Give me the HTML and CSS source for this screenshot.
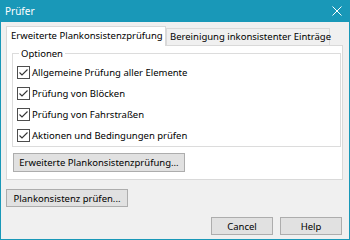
FILE: index.html
```html
<!DOCTYPE html>
<html lang="de">
<head>
  <meta charset="UTF-8">
  <title>Prüfer</title>
  <link rel="stylesheet" href="styles.css">
</head>
<body>
  <div class="window">
    <div class="titlebar">
      <span class="title">Prüfer</span>
      <svg class="close" width="10" height="10" viewBox="0 0 10 10">
        <path d="M0.5 0.5 L9.5 9.5 M9.5 0.5 L0.5 9.5" stroke="#fff" stroke-width="1" fill="none"/>
      </svg>
    </div>

    <div class="content">
      <div class="tabs">
        <div class="tab active">Erweiterte Plankonsistenzprüfung</div>
        <div class="tab">Bereinigung inkonsistenter Einträge</div>
      </div>

      <div class="panel">
        <fieldset class="group">
          <legend>Optionen</legend>
          <label class="check"><span class="box"><svg width="11" height="11" viewBox="0 0 11 11"><path d="M1.5 5.5 L4 8 L9.5 2.5" stroke="#333" stroke-width="1.1" fill="none"/></svg></span>Allgemeine Prüfung aller Elemente</label>
          <label class="check"><span class="box"><svg width="11" height="11" viewBox="0 0 11 11"><path d="M1.5 5.5 L4 8 L9.5 2.5" stroke="#333" stroke-width="1.1" fill="none"/></svg></span>Prüfung von Blöcken</label>
          <label class="check"><span class="box"><svg width="11" height="11" viewBox="0 0 11 11"><path d="M1.5 5.5 L4 8 L9.5 2.5" stroke="#333" stroke-width="1.1" fill="none"/></svg></span>Prüfung von Fahrstraßen</label>
          <label class="check"><span class="box"><svg width="11" height="11" viewBox="0 0 11 11"><path d="M1.5 5.5 L4 8 L9.5 2.5" stroke="#333" stroke-width="1.1" fill="none"/></svg></span>Aktionen und Bedingungen prüfen</label>
        </fieldset>
        <button class="btn btn-extended">Erweiterte Plankonsistenzprüfung...</button>
      </div>

      <button class="btn btn-check">Plankonsistenz prüfen...</button>

      <div class="actions">
        <button class="btn btn-dialog">Cancel</button>
        <button class="btn btn-dialog">Help</button>
      </div>
    </div>
  </div>
</body>
</html>
```

FILE: styles.css
```css
body {
  margin: 0;
  font-family: "Noto Sans", "DejaVu Sans", sans-serif;
  font-size: 9.5px;
  color: #000;
}

.window {
  width: 350px;
  height: 240px;
  box-sizing: border-box;
  border: 1px solid #1998b8;
  border-top: 0;
  background: #f0f0f0;
  display: flex;
  flex-direction: column;
}

.titlebar {
  height: 22px;
  margin: 0 -1px;
  padding: 0 8px 0 5px;
  background: #1998b8;
  color: #fff;
  display: flex;
  align-items: center;
  justify-content: space-between;
  flex-shrink: 0;
}

.title {
  font-size: 10px;
}

.content {
  padding: 4px 6px 0 5px;
  display: flex;
  flex-direction: column;
}

.tabs {
  display: flex;
  align-items: flex-end;
  height: 19px;
}

.tab {
  box-sizing: border-box;
  width: 164px;
  height: 17px;
  padding: 0 3px;
  border: 1px solid #d9d9d9;
  border-bottom: 0;
  background: #f0f0f0;
  line-height: 15px;
  white-space: nowrap;
}

.tab.active {
  width: 160px;
  height: 20px;
  margin-bottom: -1px;
  padding-left: 4px;
  background: #fff;
  line-height: 18px;
  z-index: 1;
}

.panel {
  box-sizing: border-box;
  width: 337px;
  height: 135px;
  border: 1px solid #d9d9d9;
  background: #fff;
  display: flex;
  flex-direction: column;
  align-items: flex-start;
}

.group {
  box-sizing: border-box;
  align-self: stretch;
  height: 101px;
  margin: 0 1px 0 5px;
  padding: 1px 0 0 4px;
  border: 1px solid #dcdcdc;
  display: flex;
  flex-direction: column;
  gap: 1px;
}

.group legend {
  margin-left: 2px;
  padding: 0 2px;
  line-height: 15px;
}

.check {
  height: 20px;
  display: flex;
  align-items: center;
  gap: 2px;
  white-space: nowrap;
}

.box {
  box-sizing: border-box;
  width: 13px;
  height: 13px;
  border: 1px solid #4d4d4d;
  background: #fff;
  display: flex;
  align-items: center;
  justify-content: center;
}

.box svg {
  display: block;
}

.btn {
  box-sizing: border-box;
  padding: 0;
  border: 1px solid #adadad;
  background: #e1e1e1;
  font-family: inherit;
  font-size: 9.5px;
  color: #000;
}

.btn-extended {
  width: 172px;
  height: 19px;
  margin: 6px 0 0 6px;
}

.btn-check {
  width: 122px;
  height: 18px;
  margin-top: 9px;
}

.actions {
  display: flex;
  justify-content: flex-end;
  gap: 7px;
  margin: 10px 1px 0 0;
}

.btn-dialog {
  width: 62px;
  height: 18px;
}
```
